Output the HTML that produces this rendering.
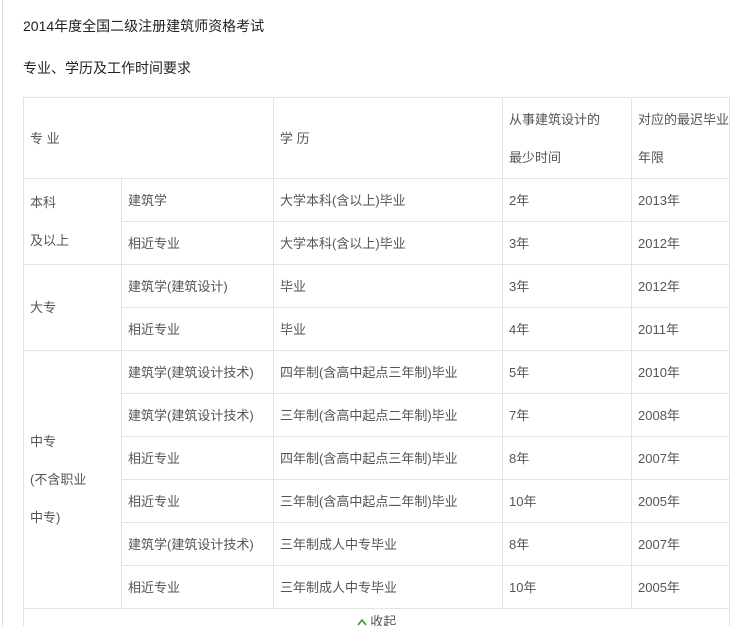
<!DOCTYPE html>
<html><head><meta charset="utf-8"><style>
html,body{margin:0;padding:0;background:#fff;width:742px;height:626px;overflow:hidden}
body{font-family:"Liberation Sans","Noto Sans CJK SC",sans-serif;color:#333;position:relative}
.lb{position:absolute;left:2px;top:0;width:1px;height:626px;background:#ddd}
.t{position:absolute;left:23px;font-size:14px;color:#222}
table{position:absolute;left:23px;top:97px;border-collapse:collapse;table-layout:fixed;font-size:13px;color:#555}
td{border:1px solid #e3e3e3;padding:1px 0 0 6px;vertical-align:middle;line-height:38px;height:41px}
.hd td{height:79px}
.ft{position:absolute;left:23px;top:608px;width:705px;height:30px;border:1px solid #e3e3e3;border-top:none;text-align:center;font-size:13px;color:#555;line-height:28px}
</style></head><body>
<div class="lb"></div>
<div class="t" style="top:16px">2014年度全国二级注册建筑师资格考试</div>
<div class="t" style="top:58px">专业、学历及工作时间要求</div>
<table>
<colgroup><col style="width:98px"><col style="width:152px"><col style="width:229px"><col style="width:129px"><col style="width:98px"></colgroup>
<tr class="hd"><td colspan="2">专 业</td><td>学 历</td><td>从事建筑设计的<br>最少时间</td><td>对应的最迟毕业<br>年限</td></tr>
<tr><td rowspan="2">本科<br>及以上</td><td>建筑学</td><td>大学本科(含以上)毕业</td><td>2年</td><td>2013年</td></tr>
<tr><td>相近专业</td><td>大学本科(含以上)毕业</td><td>3年</td><td>2012年</td></tr>
<tr><td rowspan="2">大专</td><td>建筑学(建筑设计)</td><td>毕业</td><td>3年</td><td>2012年</td></tr>
<tr><td>相近专业</td><td>毕业</td><td>4年</td><td>2011年</td></tr>
<tr><td rowspan="6">中专<br>(不含职业<br>中专)</td><td>建筑学(建筑设计技术)</td><td>四年制(含高中起点三年制)毕业</td><td>5年</td><td>2010年</td></tr>
<tr><td>建筑学(建筑设计技术)</td><td>三年制(含高中起点二年制)毕业</td><td>7年</td><td>2008年</td></tr>
<tr><td>相近专业</td><td>四年制(含高中起点三年制)毕业</td><td>8年</td><td>2007年</td></tr>
<tr><td>相近专业</td><td>三年制(含高中起点二年制)毕业</td><td>10年</td><td>2005年</td></tr>
<tr><td>建筑学(建筑设计技术)</td><td>三年制成人中专毕业</td><td>8年</td><td>2007年</td></tr>
<tr><td>相近专业</td><td>三年制成人中专毕业</td><td>10年</td><td>2005年</td></tr>
</table>
<div class="ft"><svg width="10" height="8" viewBox="0 0 10 8" style="vertical-align:0px"><path d="M1 7 L5 2 L9 7" fill="none" stroke="#3a9a2a" stroke-width="1.6"/></svg> 收起</div>
</body></html>
